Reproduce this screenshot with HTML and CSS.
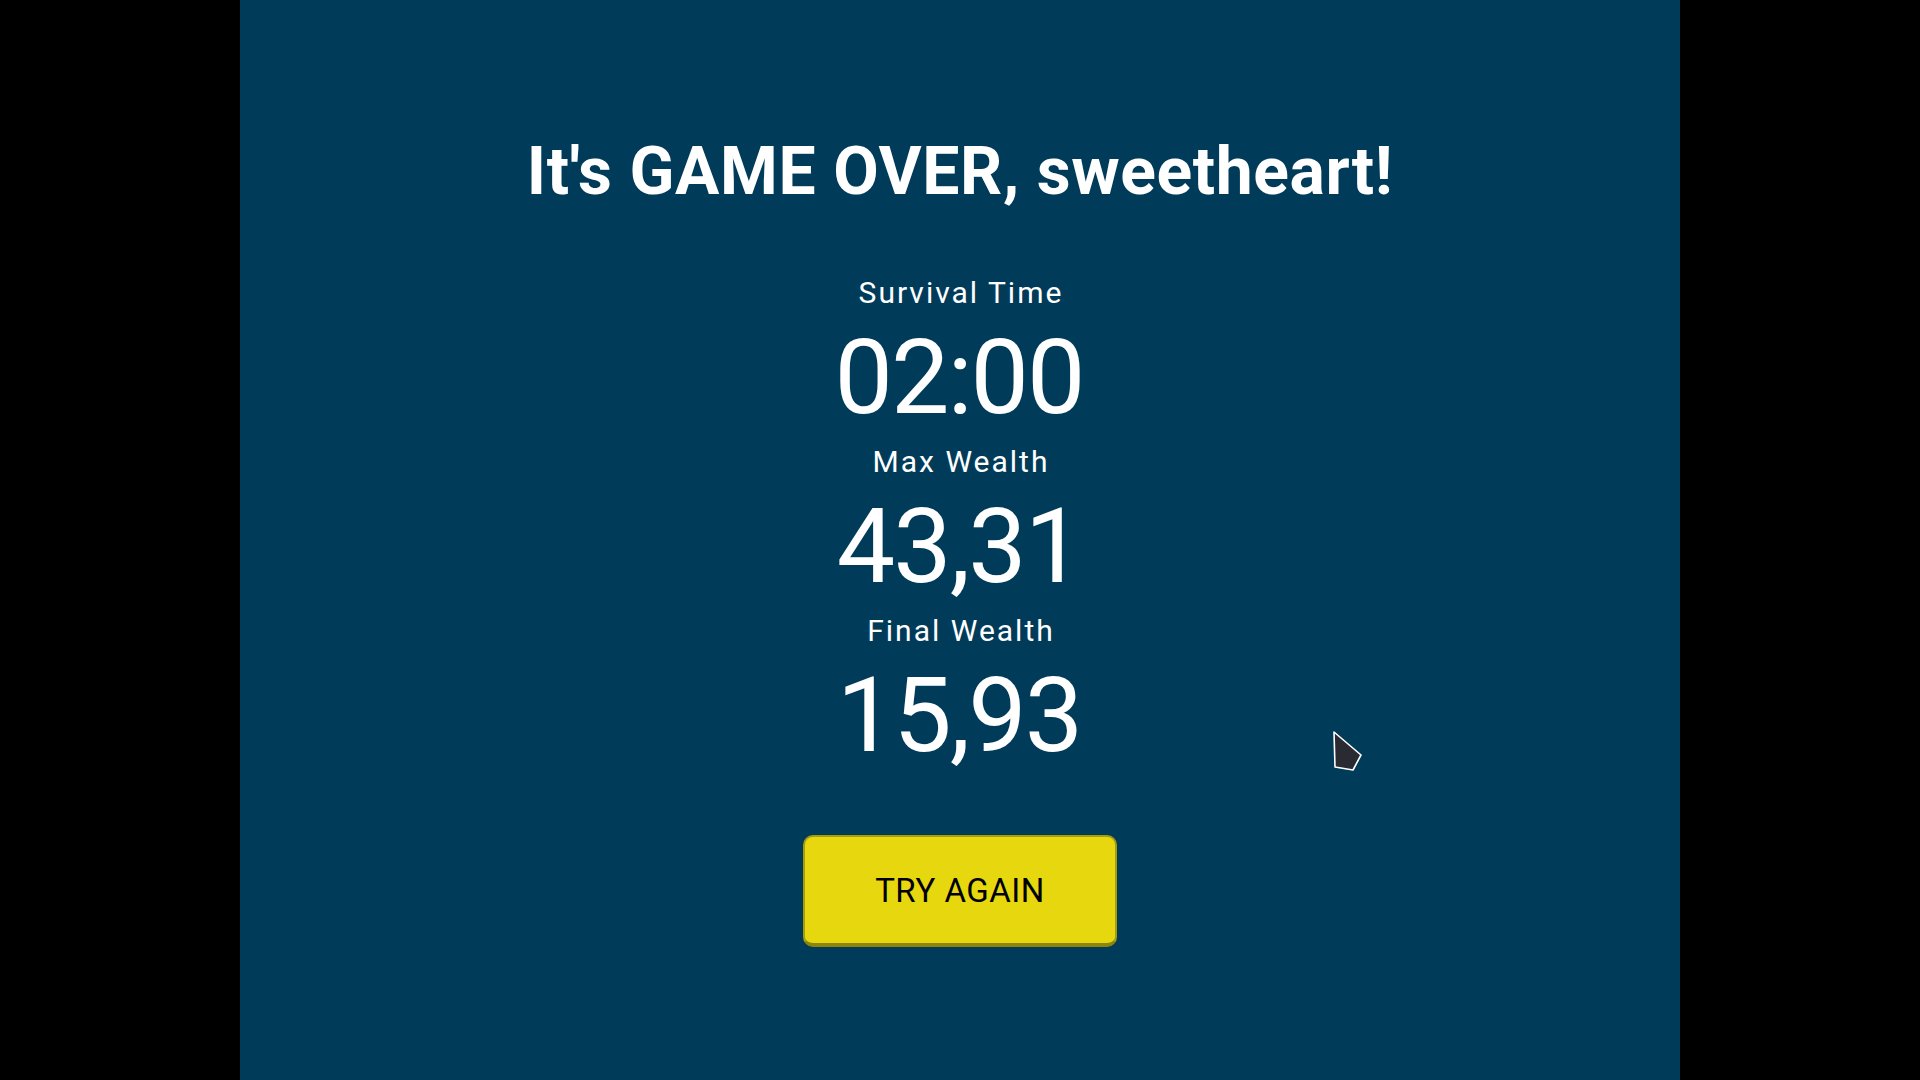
FILE: index.html
```html
<!DOCTYPE html>
<html>
<head>
    <title>Game Over</title>
    <link rel="stylesheet" href="styles.css">
</head>
<body>
    <div class="screen">
        <h1 class="title">It's GAME OVER, sweetheart!</h1>
        <div class="stats">
            <div class="stat">
                <div class="label">Survival Time</div>
                <div class="value">02:00</div>
            </div>
            <div class="stat">
                <div class="label">Max Wealth</div>
                <div class="value">43,31</div>
            </div>
            <div class="stat">
                <div class="label">Final Wealth</div>
                <div class="value">15,93</div>
            </div>
        </div>
        <button class="retry">TRY AGAIN</button>

        <!-- in-game pointer -->
        <svg class="pointer" width="40" height="50" viewBox="0 0 40 50">
            <polygon points="4,4 31,27 23,42 5,39" fill="#2a2a33" stroke="#fff" stroke-width="1.6" stroke-linejoin="round"/>
        </svg>
    </div>
</body>
</html>
```

FILE: styles.css
```css
html, body {
    margin: 0;
    height: 100%;
    background-color: #000;
}
body {
    display: flex;
    justify-content: center;
    font-family: Roboto, "Liberation Sans", sans-serif;
}
.screen {
    width: 1440px;
    height: 1080px;
    background-color: #003c5a;
    position: relative;
    display: flex;
    flex-direction: column;
    align-items: center;
    padding-top: 133px;
    box-sizing: border-box;
    color: #fff;
}
.title {
    margin: 0;
    font-size: 66px;
    font-weight: 700;
    line-height: 77px;
    letter-spacing: 0.6px;
}
.stats {
    margin-top: 63px;
    display: flex;
    flex-direction: column;
    align-items: center;
}
.stat {
    display: flex;
    flex-direction: column;
    align-items: center;
}
/* letter-spacing leaves a gap after the last glyph, padding-left evens it out */
.label {
    font-size: 30px;
    line-height: 40px;
    letter-spacing: 2px;
    padding-left: 2px;
}
.value {
    font-size: 104px;
    line-height: 129px;
    letter-spacing: -2px;
    padding-right: 2px;
}
.retry {
    margin-top: 55px;
    width: 314px;
    height: 112px;
    background-color: #e6d70f;
    border: 2px solid #a69d0c;
    border-bottom-width: 4px;
    border-bottom-color: #8c850a;
    border-radius: 10px;
    font-family: Roboto, "Liberation Sans", sans-serif;
    font-size: 33px;
    letter-spacing: 0.5px;
    color: #000;
    padding: 0;
    cursor: pointer;
}
.pointer {
    position: absolute;
    left: 1090px;
    top: 728px;
}
```
